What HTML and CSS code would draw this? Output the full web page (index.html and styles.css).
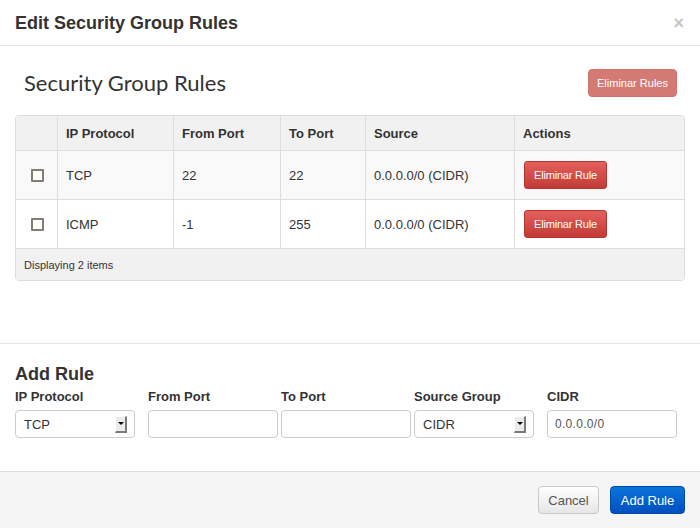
FILE: index.html
```html
<!DOCTYPE html>
<html>
<head>
<meta charset="utf-8">
<link rel="stylesheet" href="styles.css">
</head>
<body>
<div class="modal">
  <div class="modal-header">
    <h3 class="modal-title">Edit Security Group Rules</h3>
    <span class="close">&times;</span>
  </div>
  <section class="rules">
    <div class="rules-head">
      <h2 class="rules-title">Security Group Rules</h2>
      <button class="btn btn-danger is-disabled">Eliminar Rules</button>
    </div>
    <div class="table">
      <div class="tr thead">
        <div class="cell"></div>
        <div class="cell">IP Protocol</div>
        <div class="cell">From Port</div>
        <div class="cell">To Port</div>
        <div class="cell">Source</div>
        <div class="cell">Actions</div>
      </div>
      <div class="tr odd">
        <div class="cell check"><span class="checkbox"></span></div>
        <div class="cell">TCP</div>
        <div class="cell">22</div>
        <div class="cell">22</div>
        <div class="cell">0.0.0.0/0 (CIDR)</div>
        <div class="cell action"><button class="btn btn-danger btn-small">Eliminar Rule</button></div>
      </div>
      <div class="tr">
        <div class="cell check"><span class="checkbox"></span></div>
        <div class="cell">ICMP</div>
        <div class="cell">-1</div>
        <div class="cell">255</div>
        <div class="cell">0.0.0.0/0 (CIDR)</div>
        <div class="cell action"><button class="btn btn-danger btn-small">Eliminar Rule</button></div>
      </div>
      <div class="tfoot">Displaying 2 items</div>
    </div>
  </section>
  <section class="add-rule">
    <h3 class="add-title">Add Rule</h3>
    <div class="form-grid">
      <label class="field-label">IP Protocol</label>
      <label class="field-label">From Port</label>
      <label class="field-label">To Port</label>
      <label class="field-label">Source Group</label>
      <label class="field-label">CIDR</label>
      <div class="select"><span class="select-value">TCP</span><span class="select-arrow"></span></div>
      <div class="input"></div>
      <div class="input"></div>
      <div class="select"><span class="select-value">CIDR</span><span class="select-arrow"></span></div>
      <div class="input"><span class="input-value">0.0.0.0/0</span></div>
    </div>
  </section>
  <div class="modal-footer">
    <button class="btn btn-default">Cancel</button>
    <button class="btn btn-primary">Add Rule</button>
  </div>
</div>
</body>
</html>
```
FILE: styles.css
```css
* { box-sizing: border-box; }
html, body { margin: 0; padding: 0; }
body {
  font-family: "Liberation Sans", Arial, sans-serif;
  font-size: 13px;
  color: #333;
  background: #fff;
}
.modal {
  width: 700px;
  height: 528px;
  display: flex;
  flex-direction: column;
  background: #fff;
}
.modal-header {
  height: 46px;
  border-bottom: 1px solid #e5e5e5;
  display: flex;
  align-items: center;
  justify-content: space-between;
  padding: 0 16px 0 15px;
}
.modal-title {
  margin: 0;
  font-size: 18px;
  font-weight: bold;
  line-height: 20px;
  color: #333;
}
.close {
  font-size: 18px;
  font-weight: bold;
  color: #c6c6c6;
  line-height: 18px;
}
.rules {
  padding: 23px 15px 62px;
}
.rules-head {
  height: 28px;
  display: flex;
  align-items: center;
  justify-content: space-between;
  padding-left: 9px;
  padding-right: 8px;
}
.rules-title {
  margin: 0;
  font-family: Lato, "Open Sans", sans-serif;
  font-weight: 400;
  font-size: 22px;
  line-height: 28px;
  color: #333;
}
.btn {
  font-family: "Liberation Sans", Arial, sans-serif;
  border-radius: 4px;
  height: 28px;
  padding: 0;
  cursor: pointer;
}
.btn-danger {
  color: #fff;
  background: linear-gradient(#e4605d, #c23b36);
  border: 1px solid #b43632;
  font-size: 11px;
}
.btn-danger.is-disabled {
  width: 89px;
  background: #d47a74;
  border: 1px solid #cf746e;
  font-size: 11px;
}
.btn-small {
  width: 83px;
  border-radius: 3px;
  letter-spacing: -0.2px;
}
.table {
  margin-top: 18px;
  border: 1px solid #ddd;
  border-radius: 4px;
  overflow: hidden;
}
.tr {
  display: grid;
  grid-template-columns: 41px 116px 107px 85px 149px 170px;
  height: 49px;
  border-top: 1px solid #ddd;
  background: #fff;
}
.tr.thead {
  height: 34px;
  border-top: 0;
  background: #f1f1f1;
  font-weight: bold;
}
.tr.odd { background: #f9f9f9; }
.cell {
  display: flex;
  align-items: center;
  padding: 0 8px;
  border-left: 1px solid #ddd;
}
.cell.action { padding-left: 9px; }
.cell:first-child { border-left: 0; }
.cell.check { justify-content: center; padding: 0 0 0 1px; }
.checkbox {
  width: 13px;
  height: 13px;
  border: 2px solid #857b70;
  background: #fff;
  border-radius: 1px;
}
.tfoot {
  height: 32px;
  border-top: 1px solid #ddd;
  background: #f1f1f1;
  display: flex;
  align-items: center;
  padding-left: 8px;
  font-size: 11px;
}
.add-rule {
  flex: 1;
  border-top: 1px solid #e5e5e5;
  padding: 20px 15px 0;
}
.add-title {
  margin: 0;
  font-size: 18px;
  font-weight: bold;
  line-height: 20px;
}
.form-grid {
  margin-top: 5px;
  display: grid;
  grid-template-columns: repeat(5, 133px);
  grid-template-rows: 16px 28px;
  row-gap: 5px;
}
.field-label {
  font-weight: bold;
  font-size: 13px;
  line-height: 16px;
}
.select, .input {
  height: 28px;
  border: 1px solid #ccc;
  border-radius: 4px;
  background: #fff;
  display: flex;
  align-items: center;
}
.select { width: 120px; padding: 0 7px 0 8px; justify-content: space-between; }
.input { width: 130px; padding: 0 7px; }
.select-value { font-size: 13px; color: #333; }
.input-value { font-size: 12px; color: #555; letter-spacing: 0.3px; }
.select-arrow {
  width: 12px;
  height: 17px;
  background: #ececec;
  border-top: 1px solid #fff;
  border-left: 1px solid #fff;
  border-right: 2px solid #7a7a7a;
  border-bottom: 2px solid #7a7a7a;
  display: flex;
  align-items: center;
  justify-content: center;
}
.select-arrow::after {
  content: "";
  border-left: 3px solid transparent;
  border-right: 3px solid transparent;
  border-top: 3px solid #000;
}
.modal-footer {
  height: 57px;
  border-top: 1px solid #ddd;
  background: #f5f5f5;
  display: flex;
  justify-content: flex-end;
  align-items: flex-start;
  gap: 11px;
  padding: 14px 15px 0;
}
.btn-default {
  width: 61px;
  font-size: 13px;
  color: #555;
  background: linear-gradient(#fff, #e6e6e6);
  border: 1px solid #c8c8c8;
}
.btn-primary {
  width: 75px;
  font-size: 13px;
  color: #fff;
  background: linear-gradient(#0b74d9, #0050bf);
  border: 1px solid #0049ad;
}
```
